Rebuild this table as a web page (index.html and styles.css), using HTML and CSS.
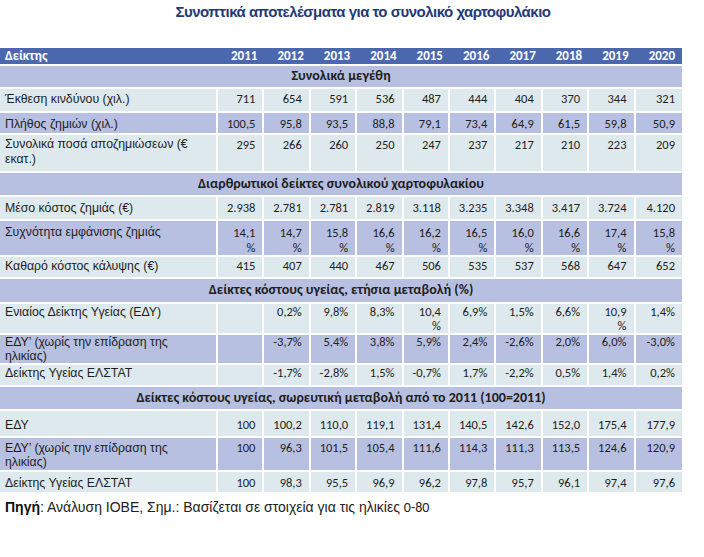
FILE: index.html
```html
<!DOCTYPE html>
<html lang="el">
<head>
<meta charset="utf-8">
<title>Συνοπτικά αποτελέσματα</title>
<link rel="stylesheet" href="styles.css">
</head>
<body>
<div class="title">Συνοπτικά αποτελέσματα για το συνολικό χαρτοφυλάκιο</div>
<table class="data">
<colgroup><col class="c-label"><col><col><col><col><col><col><col><col><col><col></colgroup>
<thead>
<tr class="head r18"><th class="lbl">Δείκτης</th><th>2011</th><th>2012</th><th>2013</th><th>2014</th><th>2015</th><th>2016</th><th>2017</th><th>2018</th><th>2019</th><th>2020</th></tr>
</thead>
<tbody>
<tr class="sec r23"><td colspan="11">Συνολικά μεγέθη</td></tr>
<tr class="lt r24 p3"><td class="lbl">Έκθεση κινδύνου (χιλ.)</td><td>711</td><td>654</td><td>591</td><td>536</td><td>487</td><td>444</td><td>404</td><td>370</td><td>344</td><td>321</td></tr>
<tr class="pp r22 p4"><td class="lbl">Πλήθος ζημιών (χιλ.)</td><td>100,5</td><td>95,8</td><td>93,5</td><td>88,8</td><td>79,1</td><td>73,4</td><td>64,9</td><td>61,5</td><td>59,8</td><td>50,9</td></tr>
<tr class="lt r38 p2 lh15"><td class="lbl">Συνολικά ποσά αποζημιώσεων (€<br>εκατ.)</td><td>295</td><td>266</td><td>260</td><td>250</td><td>247</td><td>237</td><td>217</td><td>210</td><td>223</td><td>209</td></tr>
<tr class="sec r24"><td colspan="11">Διαρθρωτικοί δείκτες συνολικού χαρτοφυλακίου</td></tr>
<tr class="lt r24 p4"><td class="lbl">Μέσο κόστος ζημιάς (€)</td><td>2.938</td><td>2.781</td><td>2.781</td><td>2.819</td><td>3.118</td><td>3.235</td><td>3.348</td><td>3.417</td><td>3.724</td><td>4.120</td></tr>
<tr class="pp r36 p4 lh15"><td class="lbl">Συχνότητα εμφάνισης ζημιάς</td><td>14,1<br>%</td><td>14,7<br>%</td><td>15,8<br>%</td><td>16,6<br>%</td><td>16,2<br>%</td><td>16,5<br>%</td><td>16,0<br>%</td><td>16,6<br>%</td><td>17,4<br>%</td><td>15,8<br>%</td></tr>
<tr class="lt r22 p2"><td class="lbl">Καθαρό κόστος κάλυψης (€)</td><td>415</td><td>407</td><td>440</td><td>467</td><td>506</td><td>535</td><td>537</td><td>568</td><td>647</td><td>652</td></tr>
<tr class="sec r25"><td colspan="11">Δείκτες κόστους υγείας, ετήσια μεταβολή (%)</td></tr>
<tr class="lt r31 p1"><td class="lbl">Ενιαίος Δείκτης Υγείας (ΕΔΥ)</td><td></td><td>0,2%</td><td>9,8%</td><td>8,3%</td><td>10,4<br>%</td><td>6,9%</td><td>1,5%</td><td>6,6%</td><td>10,9<br>%</td><td>1,4%</td></tr>
<tr class="pp r30 p0"><td class="lbl">ΕΔΥ’ (χωρίς την επίδραση της<br>ηλικίας)</td><td></td><td>-3,7%</td><td>5,4%</td><td>3,8%</td><td>5,9%</td><td>2,4%</td><td>-2,6%</td><td>2,0%</td><td>6,0%</td><td>-3,0%</td></tr>
<tr class="lt r22 p1"><td class="lbl">Δείκτης Υγείας ΕΛΣΤΑΤ</td><td></td><td>-1,7%</td><td>-2,8%</td><td>1,5%</td><td>-0,7%</td><td>1,7%</td><td>-2,2%</td><td>0,5%</td><td>1,4%</td><td>0,2%</td></tr>
<tr class="sec r24"><td colspan="11">Δείκτες κόστους υγείας, σωρευτική μεταβολή από το 2011 (100=2011)</td></tr>
<tr class="lt r27 p7"><td class="lbl">ΕΔΥ</td><td>100</td><td>100,2</td><td>110,0</td><td>119,1</td><td>131,4</td><td>140,5</td><td>142,6</td><td>152,0</td><td>175,4</td><td>177,9</td></tr>
<tr class="pp r34 p3"><td class="lbl">ΕΔΥ’ (χωρίς την επίδραση της<br>ηλικίας)</td><td>100</td><td>96,3</td><td>101,5</td><td>105,4</td><td>111,6</td><td>114,3</td><td>111,3</td><td>113,5</td><td>124,6</td><td>120,9</td></tr>
<tr class="lt r22 p4"><td class="lbl">Δείκτης Υγείας ΕΛΣΤΑΤ</td><td>100</td><td>98,3</td><td>95,5</td><td>96,9</td><td>96,2</td><td>97,8</td><td>95,7</td><td>96,1</td><td>97,4</td><td>97,6</td></tr>
</tbody>
</table>
<p class="note"><b>Πηγή</b>: Ανάλυση ΙΟΒΕ, Σημ.: Βασίζεται σε στοιχεία για τις ηλικίες <span class="num">0-80</span></p>
</body>
</html>
```
FILE: styles.css
```css
html, body {
  margin: 0;
  padding: 0;
  background: #ffffff;
}
body {
  width: 704px;
  font-family: "Liberation Sans", Arial, sans-serif;
  color: #222;
}
.title {
  padding: 3px 0 0 22px;
  height: 48px;
  box-sizing: border-box;
  text-align: center;
  font-family: "Liberation Sans Narrow", "Liberation Sans", sans-serif;
  font-weight: bold;
  font-size: 15px;
  letter-spacing: -0.5px;
  line-height: 18px;
  color: #1f3a78;
}
.data {
  width: 682px;
  table-layout: fixed;
  border-collapse: separate;
  border-spacing: 0;
  font-family: "Carlito", "Lato", "Noto Sans", sans-serif;
  font-size: 12.5px;
  color: #1e1e1e;
}
.c-label { width: 218px; }
.data td, .data th {
  border-right: 2px solid #ffffff;
  border-bottom: 2px solid #ffffff;
  padding: 4px 7px 0 4px;
  vertical-align: top;
  text-align: right;
  line-height: 14px;
  white-space: nowrap;
}
.data td:last-child, .data th:last-child { border-right: 0; }
.data .lbl {
  text-align: left;
  font-family: "Liberation Sans", Arial, sans-serif;
  font-size: 12.3px;
  padding-left: 5px;
}
.p0 td { padding-top: 0; }
.p1 td { padding-top: 1px; }
.p2 td { padding-top: 2px; }
.p3 td { padding-top: 3px; }
.p4 td { padding-top: 4px; }
.p7 td { padding-top: 7px; }
.lh15 td { line-height: 15px; }
.head th {
  background: #4b68ae;
  color: #ffffff;
  font-weight: bold;
  font-size: 13px;
  padding-top: 0;
  vertical-align: middle;
  border-right: 0;
}
.head th.lbl {
  font-family: "Carlito", "Lato", "Noto Sans", sans-serif;
  font-size: 13.5px;
}
.sec td {
  background: #b7c0e1;
  text-align: center;
  vertical-align: middle;
  font-weight: bold;
  font-size: 14px;
  padding: 0 4px 1px;
}
.lt td { background: #dde9ec; }
.pp td { background: #b7c0e1; }
.r18 { height: 18px; }
.r22 { height: 22px; }
.r23 { height: 23px; }
.r24 { height: 24px; }
.r25 { height: 25px; }
.r27 { height: 27px; }
.r30 { height: 30px; }
.r31 { height: 31px; }
.r34 { height: 34px; }
.r36 { height: 36px; }
.r38 { height: 38px; }
.note {
  margin: 5px 0 0 5px;
  font-size: 14px;
  line-height: 17px;
  color: #222;
}
.note b { color: #111; }
.num { font-family: "Carlito", "Lato", sans-serif; }
```
